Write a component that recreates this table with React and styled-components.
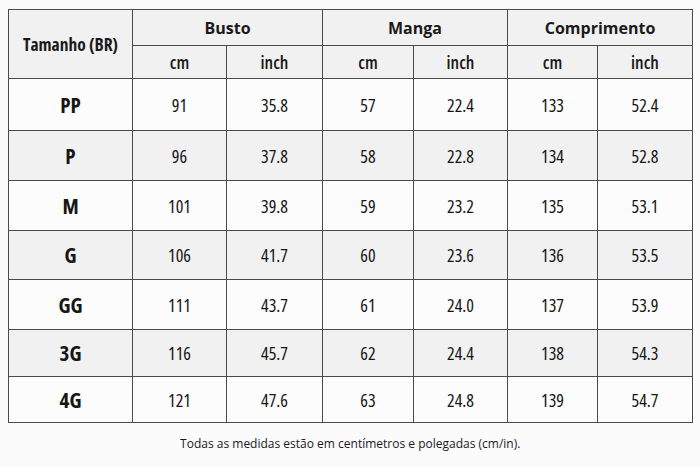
import React from "react";
import styled, { createGlobalStyle } from "styled-components";

const Global = createGlobalStyle`
  html, body { margin: 0; padding: 0; background: #fbfbfb; }
  body { font-family: "Open Sans", "Liberation Sans", sans-serif; color: #161616; }
`;

const Page = styled.div`
  width: 700px;
  height: 467px;
  padding: 9px 0 0 8px;
  box-sizing: border-box;
  display: flex;
  flex-direction: column;
`;

const Table = styled.table`
  width: 684px;
  border-collapse: collapse;
  table-layout: fixed;
  border: 1.5px solid #444;
`;

const Cell = styled.td`
  border: 1px solid #4a4a4a;
  text-align: center;
  vertical-align: middle;
  padding: 0;
  background: ${(p) => (p.$shade ? "#f1f1f1" : "#fcfcfc")};
`;

const HeadCell = styled.th`
  border: 1px solid #4a4a4a;
  text-align: center;
  vertical-align: middle;
  padding: 0;
  background: #f1f1f1;
  color: #1a1a1a;
`;

const Txt = styled.span`
  display: inline-block;
  font-size: ${(p) => p.$size}px;
  font-weight: ${(p) => p.$weight};
  font-stretch: ${(p) => p.$stretch || "75%"};
  transform: scaleX(${(p) => p.$sx || 1});
  white-space: nowrap;
`;

const HeadRow = styled.tr`
  height: ${(p) => p.$h}px;
`;

const DataRow = styled.tr`
  height: ${(p) => p.$h}px;
`;

const Note = styled.div`
  width: 684px;
  text-align: center;
  padding-top: 8px;
  color: #1a1a1a;
`;

const colWidths = [124, 94, 96, 91, 94, 90, 95];

const rows = [
  ["PP", 91, "35.8", 57, "22.4", 133, "52.4", 52],
  ["P", 96, "37.8", 58, "22.8", 134, "52.8", 50],
  ["M", 101, "39.8", 59, "23.2", 135, "53.1", 50],
  ["G", 106, "41.7", 60, "23.6", 136, "53.5", 49],
  ["GG", 111, "43.7", 61, "24.0", 137, "53.9", 50],
  ["3G", 116, "45.7", 62, "24.4", 138, "54.3", 47],
  ["4G", 121, "47.6", 63, "24.8", 139, "54.7", 46],
];

export default function App() {
  return (
    <>
      <Global />
      <Page>
        <Table>
          <colgroup>
            {colWidths.map((w, i) => (
              <col key={i} style={{ width: w }} />
            ))}
          </colgroup>
          <thead>
            <HeadRow $h={36}>
              <HeadCell rowSpan={2}>
                <Txt $size={17.5} $weight={700}>Tamanho (BR)</Txt>
              </HeadCell>
              <HeadCell colSpan={2}>
                <Txt $size={16} $weight={700} $stretch="100%">Busto</Txt>
              </HeadCell>
              <HeadCell colSpan={2}>
                <Txt $size={16} $weight={700} $stretch="100%">Manga</Txt>
              </HeadCell>
              <HeadCell colSpan={2}>
                <Txt $size={16} $weight={700} $stretch="100%">Comprimento</Txt>
              </HeadCell>
            </HeadRow>
            <HeadRow $h={33}>
              {["cm", "inch", "cm", "inch", "cm", "inch"].map((u, i) => (
                <HeadCell key={i}>
                  <Txt $size={18} $weight={600}>{u}</Txt>
                </HeadCell>
              ))}
            </HeadRow>
          </thead>
          <tbody>
            {rows.map((r, i) => (
              <DataRow key={r[0]} $h={r[7]}>
                <Cell $shade={i % 2 === 1}>
                  <Txt $size={21} $weight={700}>{r[0]}</Txt>
                </Cell>
                {r.slice(1, 7).map((v, j) => (
                  <Cell key={j} $shade={i % 2 === 1}>
                    <Txt $size={18} $weight={400}>{v}</Txt>
                  </Cell>
                ))}
              </DataRow>
            ))}
          </tbody>
        </Table>
        <Note>
          <Txt $size={12.5} $weight={400} $stretch="100%" $sx={0.96}>
            Todas as medidas estão em centímetros e polegadas (cm/in).
          </Txt>
        </Note>
      </Page>
    </>
  );
}
